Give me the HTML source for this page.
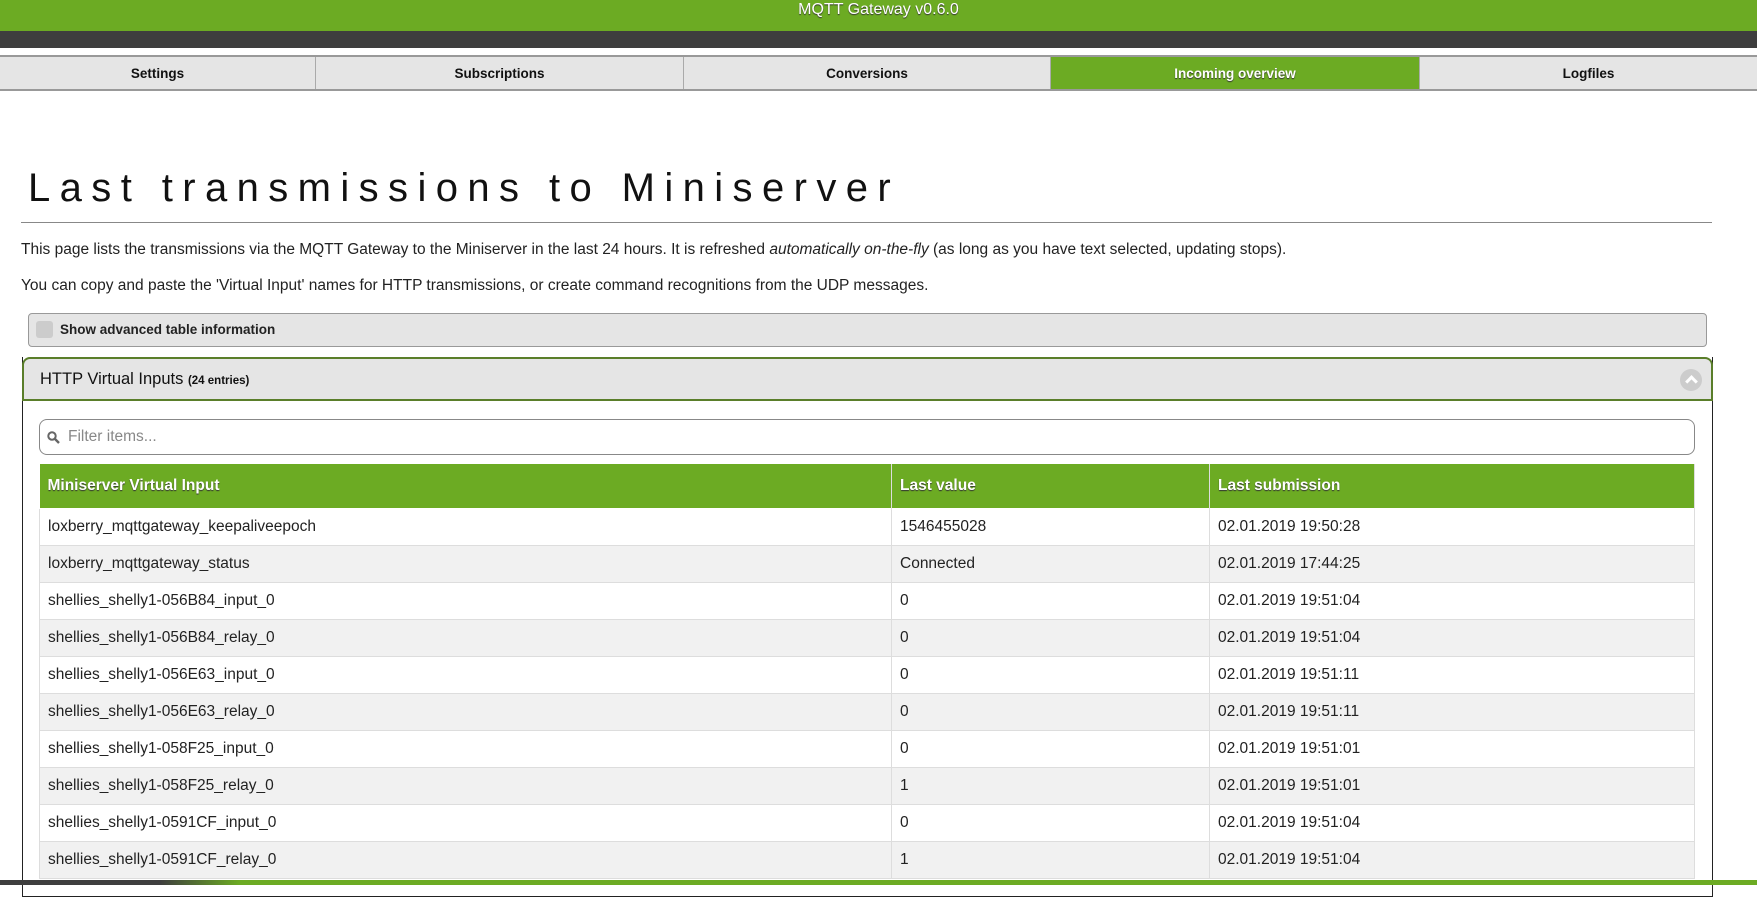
<!DOCTYPE html>
<html><head><meta charset="utf-8">
<style>
*{box-sizing:border-box;margin:0;padding:0}
body{width:1757px;height:885px;overflow:hidden;background:#fff;font-family:"Liberation Sans",Arial,sans-serif;position:relative;color:#222}
.top{position:absolute;left:0;top:0;width:1757px;height:31px;background:#6cab23;color:#fff;text-align:center;font-size:16px;line-height:20px;text-shadow:0 1px 1px #333}
.dark{position:absolute;left:0;top:31px;width:1757px;height:17px;background:#3e3e3e}
.tabs{position:absolute;left:0;top:55px;width:1757px;height:36px;border-top:2px solid #999;border-bottom:2px solid #999;background:#e5e5e5;display:flex}
.tabs div{height:100%;border-right:1px solid #aaa;text-align:center;font-weight:bold;font-size:13.5px;line-height:33px;color:#111}
.tabs .act{background:#6cab23;color:#fff;text-shadow:0 1px 1px #333}
h1{position:absolute;left:28px;top:166px;font-weight:normal;font-size:40px;letter-spacing:9.4px;color:#111}
.hr{position:absolute;left:21px;top:222px;width:1691px;border-top:1px solid #888}
p{position:absolute;left:21px;font-size:15.5px;color:#222}
.chk{position:absolute;left:28px;top:313px;width:1679px;height:34px;background:#e5e5e5;border:1px solid #999;border-radius:4px;font-weight:bold;font-size:13.5px;line-height:32px;padding-left:31px}
.chk span{position:absolute;left:7px;top:7px;width:17px;height:17px;background:#ccc;border-radius:3px}
.panel{position:absolute;left:22px;top:357px;width:1691px;height:540px;border:1px solid #222;border-top:none}
.ph{height:44px;background:#e5e5e5;border:2px solid #5a7e2a;border-radius:8px 8px 0 0;font-size:16.5px;line-height:40px;padding-left:16px;color:#111;position:relative;margin:0 -1px}
.ph small{font-size:11.5px;font-weight:bold}
.ph i{position:absolute;right:9px;top:10px;width:22px;height:22px;border-radius:50%;background:#ccc}
.ph i:after{content:"";position:absolute;left:7px;top:8px;width:6px;height:6px;border-left:3px solid #fff;border-top:3px solid #fff;transform:rotate(45deg)}
.filter{position:absolute;left:39px;top:419px;width:1656px;height:36px;border:1px solid #888;border-radius:8px;font-size:15.5px;color:#888;line-height:34px;padding-left:28px}
.filter svg{position:absolute;left:7px;top:11px}
table{position:absolute;left:39px;top:464px;width:1656px;border-collapse:collapse;font-size:15.5px}
th{background:#6cab23;color:#fff;text-align:left;font-weight:bold;height:44px;padding-left:8px;text-shadow:0 1px 1px #333;border-right:1px solid #ddd}
td{height:37px;padding-left:8px;border-right:1px solid #ddd;border-bottom:1px solid #ddd;border-left:1px solid #ddd;color:#222}
tr:nth-child(2) td{border-top:1px solid #fff}
tr:nth-child(odd) td{background:#f1f1f1}
.bot{position:absolute;left:0;top:880px;width:1757px;height:5px;background:linear-gradient(90deg,#3e3e3e 0,#3e3e3e 160px,#6cab23 240px,#6cab23 100%)}
</style></head><body>
<div class="top">MQTT Gateway v0.6.0</div>
<div class="dark"></div>
<div class="tabs">
<div style="width:316px">Settings</div>
<div style="width:368px">Subscriptions</div>
<div style="width:367px">Conversions</div>
<div class="act" style="width:369px">Incoming overview</div>
<div style="width:337px;border-right:none">Logfiles</div>
</div>
<h1>Last transmissions to Miniserver</h1>
<div class="hr"></div>
<p style="top:241px">This page lists the transmissions via the MQTT Gateway to the Miniserver in the last 24 hours. It is refreshed <i>automatically on-the-fly</i> (as long as you have text selected, updating stops).</p>
<p style="top:277px">You can copy and paste the 'Virtual Input' names for HTTP transmissions, or create command recognitions from the UDP messages.</p>
<div class="chk"><span></span>Show advanced table information</div>
<div class="panel"><div class="ph">HTTP Virtual Inputs <small>(24 entries)</small><i></i></div></div>
<div class="filter"><svg width="13" height="13" viewBox="0 0 13 13"><circle cx="5" cy="5" r="3.7" fill="none" stroke="#666" stroke-width="2"/><path d="M8 8L12 12" stroke="#666" stroke-width="2.4"/></svg>Filter items...</div>
<table>
<tr><th style="width:852px">Miniserver Virtual Input</th><th style="width:318px">Last value</th><th>Last submission</th></tr>
<tr><td>loxberry_mqttgateway_keepaliveepoch</td><td>1546455028</td><td>02.01.2019 19:50:28</td></tr>
<tr><td>loxberry_mqttgateway_status</td><td>Connected</td><td>02.01.2019 17:44:25</td></tr>
<tr><td>shellies_shelly1-056B84_input_0</td><td>0</td><td>02.01.2019 19:51:04</td></tr>
<tr><td>shellies_shelly1-056B84_relay_0</td><td>0</td><td>02.01.2019 19:51:04</td></tr>
<tr><td>shellies_shelly1-056E63_input_0</td><td>0</td><td>02.01.2019 19:51:11</td></tr>
<tr><td>shellies_shelly1-056E63_relay_0</td><td>0</td><td>02.01.2019 19:51:11</td></tr>
<tr><td>shellies_shelly1-058F25_input_0</td><td>0</td><td>02.01.2019 19:51:01</td></tr>
<tr><td>shellies_shelly1-058F25_relay_0</td><td>1</td><td>02.01.2019 19:51:01</td></tr>
<tr><td>shellies_shelly1-0591CF_input_0</td><td>0</td><td>02.01.2019 19:51:04</td></tr>
<tr><td>shellies_shelly1-0591CF_relay_0</td><td>1</td><td>02.01.2019 19:51:04</td></tr>
</table>
<div class="bot"></div>
</body></html>
